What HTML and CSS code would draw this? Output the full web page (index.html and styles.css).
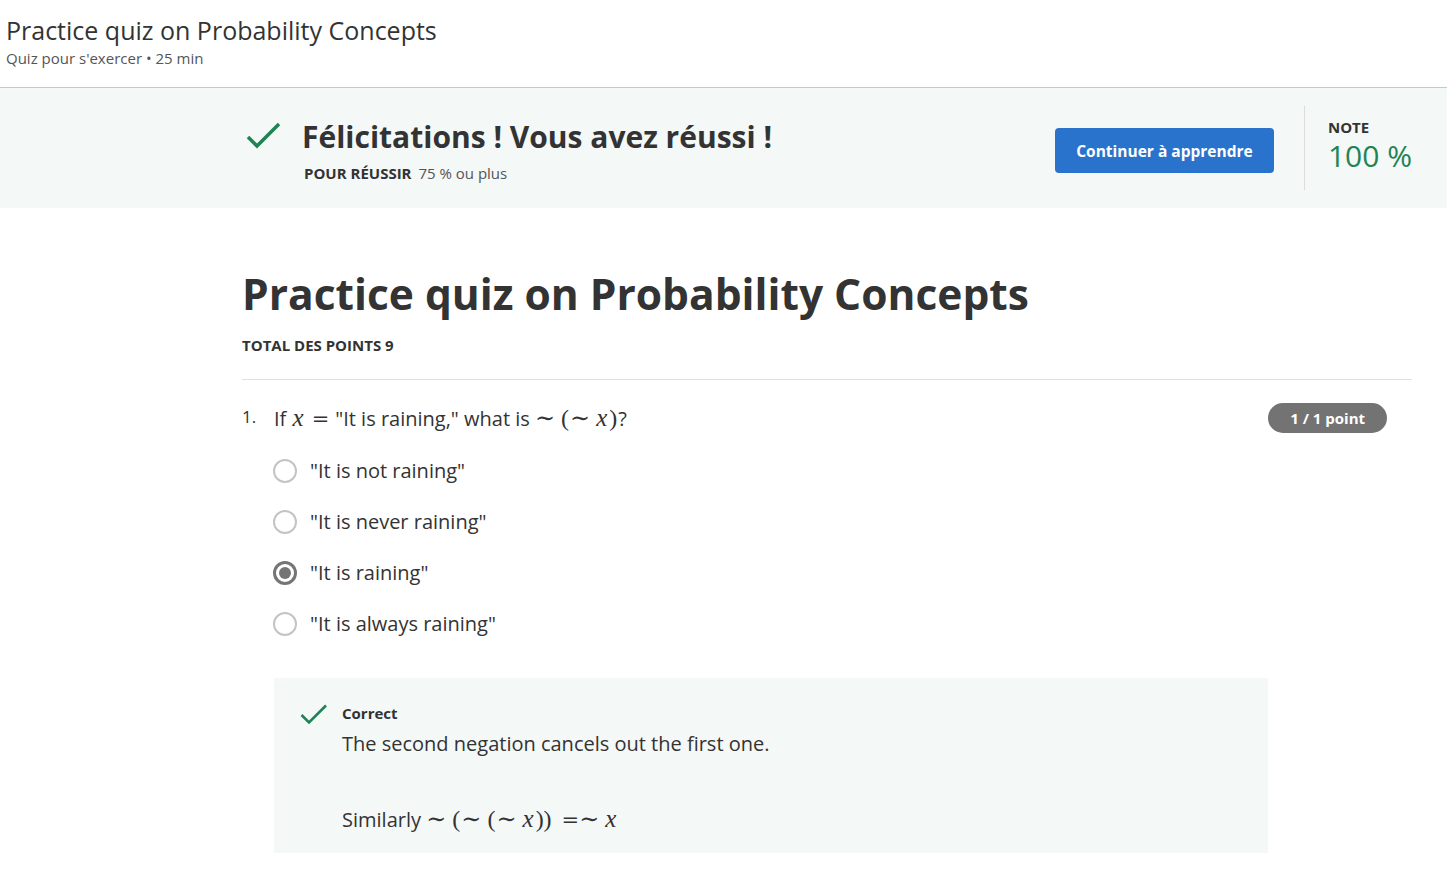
FILE: index.html
```html
<!DOCTYPE html>
<html lang="fr">
<head>
<meta charset="utf-8">
<title>Practice quiz on Probability Concepts</title>
<link rel="stylesheet" href="styles.css">
</head>
<body>
<header class="top">
  <h1 class="top-title">Practice quiz on Probability Concepts</h1>
  <div class="top-sub">Quiz pour s'exercer • 25 min</div>
</header>

<section class="banner">
  <div class="banner-main">
    <svg class="banner-check" width="36" height="30" viewBox="0 0 36 30"><path d="M2 16 L11 25 L33 3" fill="none" stroke="#1f8354" stroke-width="3.5"/></svg>
    <div class="banner-text">
      <div class="banner-title">Félicitations ! Vous avez réussi !</div>
      <div class="banner-sub"><span class="lbl">POUR RÉUSSIR</span> 75 % ou plus</div>
    </div>
  </div>
  <button class="btn">Continuer à apprendre</button>
  <div class="divider"></div>
  <div class="note">
    <div class="note-lbl">NOTE</div>
    <div class="note-val">100 %</div>
  </div>
</section>

<main class="content">
  <h2 class="quiz-title">Practice quiz on Probability Concepts</h2>
  <div class="total">TOTAL DES POINTS 9</div>
  <hr class="sep">

  <div class="question">
    <div class="q-head">
      <span class="q-num">1.</span>
      <div class="q-text">If <span class="math"><span class="mi">x</span><span class="eq">=</span></span>"It is raining," what is <span class="math"><span class="tl">∼</span><span class="par">(</span><span class="tl">∼</span><span class="mi">x</span><span class="par">)</span></span>?</div>
      <span class="badge">1 / 1 point</span>
    </div>
    <ul class="options">
      <li class="opt"><span class="radio"></span>"It is not raining"</li>
      <li class="opt"><span class="radio"></span>"It is never raining"</li>
      <li class="opt"><span class="radio checked"></span>"It is raining"</li>
      <li class="opt"><span class="radio"></span>"It is always raining"</li>
    </ul>
    <div class="feedback">
      <svg class="fb-check" width="28" height="22" viewBox="0 0 28 22"><path d="M1.5 11 L9 18.5 L26 1.5" fill="none" stroke="#1f8354" stroke-width="2.6"/></svg>
      <div class="fb-body">
        <div class="fb-title">Correct</div>
        <p class="fb-text">The second negation cancels out the first one.</p>
        <p class="fb-text fb-math">Similarly <span class="math"><span class="tl">∼</span><span class="par">(</span><span class="tl">∼</span><span class="par">(</span><span class="tl">∼</span><span class="mi">x</span><span class="par">))</span><span class="eq eq-l">=</span><span class="tl">∼</span><span class="mi">x</span></span></p>
      </div>
    </div>
  </div>
</main>
</body>
</html>
```

FILE: styles.css
```css
* { box-sizing: border-box; }
body {
  margin: 0;
  font-family: "Open Sans", "Noto Sans", sans-serif;
  color: #373a3c;
  background: #fff;
}
.top {
  height: 88px;
  padding: 13px 6px 0;
  border-bottom: 1px solid #c8c8c8;
}
.top-title {
  margin: 0;
  font-size: 25px;
  font-weight: 400;
  line-height: 35px;
  color: #333;
}
.top-sub {
  font-size: 15px;
  line-height: 20px;
  color: #555;
}
.banner {
  height: 120px;
  background: #f4f8f7;
  display: flex;
  align-items: center;
  padding: 0 35px 0 246px;
}
.banner-main {
  flex: 1;
  display: flex;
  align-items: flex-start;
  gap: 20px;
}
.banner-check { margin-top: 7px; flex-shrink: 0; }
.banner-text { padding-top: 3px; }
.banner-title {
  font-size: 30px;
  font-weight: 700;
  line-height: 40px;
  color: #333;
}
.banner-sub {
  font-size: 15px;
  color: #555;
  margin-top: 6px;
  padding-left: 2px;
}
.banner-sub .lbl { font-weight: 700; color: #333; margin-right: 3px; }
.btn {
  width: 219px;
  height: 45px;
  border: none;
  border-radius: 4px;
  background: #2a73cc;
  color: #fff;
  font-family: inherit;
  font-size: 15.5px;
  font-weight: 700;
  margin-top: 5px;
}
.divider {
  width: 1px;
  height: 84px;
  background: #dcdcdc;
  margin: 0 23px 0 30px;
}
.note { padding-bottom: 8px; }
.note-lbl {
  font-size: 15px;
  font-weight: 700;
  color: #333;
  line-height: 18px;
}
.note-val {
  font-size: 30px;
  color: #1f8354;
  line-height: 30px;
  margin-top: 5px;
}
.content {
  padding: 56px 35px 0 242px;
}
.quiz-title {
  margin: 0;
  font-size: 42.5px;
  font-weight: 700;
  line-height: 60px;
  color: #333;
}
.total {
  font-size: 15px;
  font-weight: 700;
  color: #333;
  margin-top: 11px;
}
.sep {
  border: none;
  border-top: 1px solid #e1e1e1;
  margin: 24px 0 0;
}
.question { padding-top: 23px; }
.q-head {
  display: flex;
  align-items: center;
  padding-right: 25px;
}
.q-num {
  width: 32px;
  font-size: 17px;
  color: #333;
  align-self: flex-start;
  padding-top: 2px;
}
.q-text {
  flex: 1;
  font-size: 20px;
  color: #333;
}
.math {
  font-family: "Liberation Serif", "DejaVu Serif", serif;
  font-size: 24px;
  line-height: 1;
}
.mi { font-style: italic; font-size: 25px; margin: 0 1px; }
.par { font-family: "Liberation Serif", serif; margin: 0 1px; }
.tl {
  font-family: "DejaVu Serif", serif;
  font-size: 24px;
  margin-right: 5px;
}
.eq {
  font-family: "DejaVu Serif", serif;
  font-size: 21px;
  margin: 0 6px 0 7px;
}
.eq.eq-l { margin: 0 0 0 9px; }
.badge {
  background: #737373;
  color: #fff;
  font-size: 15px;
  font-weight: 700;
  height: 30px;
  line-height: 30px;
  padding: 0 22px;
  border-radius: 15px;
}
.options {
  list-style: none;
  margin: 12px 0 0;
  padding: 0 0 0 31px;
}
.opt {
  display: flex;
  align-items: center;
  gap: 13px;
  height: 51px;
  font-size: 20px;
  color: #333;
}
.radio {
  width: 24px;
  height: 24px;
  border: 2px solid #c4c4c4;
  border-radius: 50%;
  display: inline-flex;
  align-items: center;
  justify-content: center;
}
.radio.checked { border: 3px solid #757575; }
.radio.checked::after {
  content: "";
  width: 12px;
  height: 12px;
  border-radius: 50%;
  background: #757575;
}
.feedback {
  margin: 29px 144px 0 32px;
  background: #f4f8f7;
  display: flex;
  gap: 14px;
  padding: 24px 20px 18px 26px;
  min-height: 175px;
}
.fb-check { flex-shrink: 0; margin-top: 2px; }
.fb-title {
  font-size: 15px;
  font-weight: 700;
  color: #333;
  line-height: 22px;
}
.fb-text {
  margin: 7px 0 0;
  font-size: 20px;
  color: #333;
  line-height: 26px;
}
.fb-math { margin-top: 49px; }
```
